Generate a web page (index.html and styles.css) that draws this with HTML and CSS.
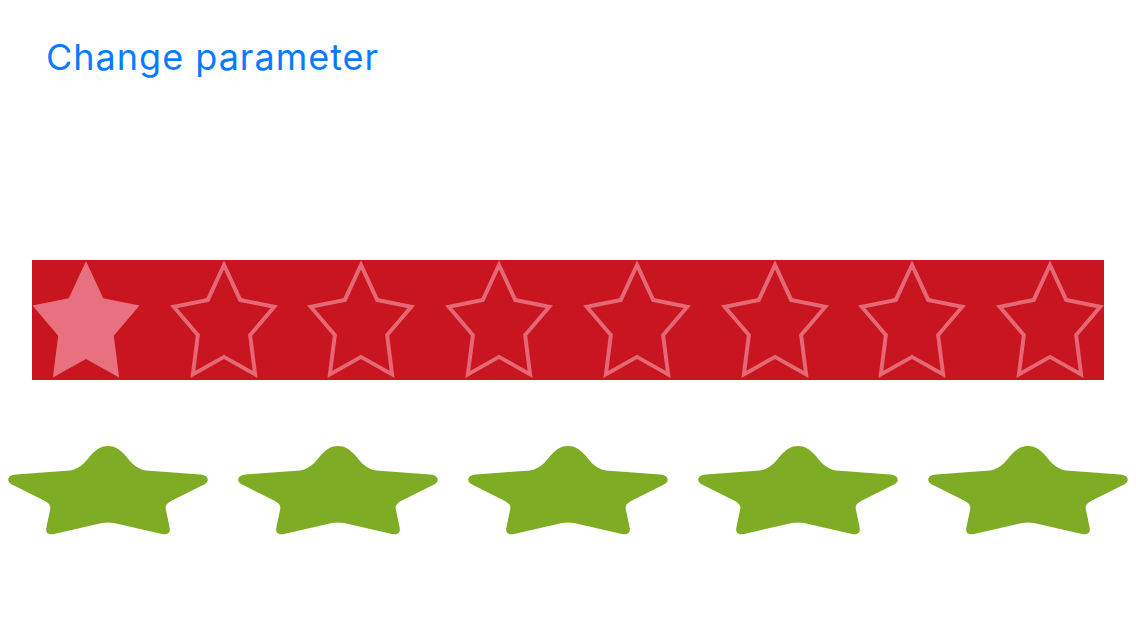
FILE: index.html
```html
<!DOCTYPE html>
<html lang="en">
<head>
<meta charset="utf-8">
<title>Rating</title>
<link rel="stylesheet" href="styles.css">
</head>
<body>
<main class="page">
  <button class="change-btn" type="button">Change parameter</button>

  <div class="rating rating--red">
    <svg class="star-red" viewBox="0 0 108 120"><polygon class="fill" points="54,1 71.2,38.3 107.5,45.5 81.8,75.7 87.1,117.5 54,98.9 20.9,117.5 26.2,75.7 0.5,45.5 36.8,38.3"/></svg>
    <svg class="star-red" viewBox="0 0 108 120"><polygon class="outline" points="54,1 71.2,38.3 107.5,45.5 81.8,75.7 87.1,117.5 54,98.9 20.9,117.5 26.2,75.7 0.5,45.5 36.8,38.3" transform="translate(54 65.4) scale(0.94) translate(-54 -65.4)"/></svg>
    <svg class="star-red" viewBox="0 0 108 120"><polygon class="outline" points="54,1 71.2,38.3 107.5,45.5 81.8,75.7 87.1,117.5 54,98.9 20.9,117.5 26.2,75.7 0.5,45.5 36.8,38.3" transform="translate(54 65.4) scale(0.94) translate(-54 -65.4)"/></svg>
    <svg class="star-red" viewBox="0 0 108 120"><polygon class="outline" points="54,1 71.2,38.3 107.5,45.5 81.8,75.7 87.1,117.5 54,98.9 20.9,117.5 26.2,75.7 0.5,45.5 36.8,38.3" transform="translate(54 65.4) scale(0.94) translate(-54 -65.4)"/></svg>
    <svg class="star-red" viewBox="0 0 108 120"><polygon class="outline" points="54,1 71.2,38.3 107.5,45.5 81.8,75.7 87.1,117.5 54,98.9 20.9,117.5 26.2,75.7 0.5,45.5 36.8,38.3" transform="translate(54 65.4) scale(0.94) translate(-54 -65.4)"/></svg>
    <svg class="star-red" viewBox="0 0 108 120"><polygon class="outline" points="54,1 71.2,38.3 107.5,45.5 81.8,75.7 87.1,117.5 54,98.9 20.9,117.5 26.2,75.7 0.5,45.5 36.8,38.3" transform="translate(54 65.4) scale(0.94) translate(-54 -65.4)"/></svg>
    <svg class="star-red" viewBox="0 0 108 120"><polygon class="outline" points="54,1 71.2,38.3 107.5,45.5 81.8,75.7 87.1,117.5 54,98.9 20.9,117.5 26.2,75.7 0.5,45.5 36.8,38.3" transform="translate(54 65.4) scale(0.94) translate(-54 -65.4)"/></svg>
    <svg class="star-red" viewBox="0 0 108 120"><polygon class="outline" points="54,1 71.2,38.3 107.5,45.5 81.8,75.7 87.1,117.5 54,98.9 20.9,117.5 26.2,75.7 0.5,45.5 36.8,38.3" transform="translate(54 65.4) scale(0.94) translate(-54 -65.4)"/></svg>
  </div>

  <div class="rating rating--green">
    <svg class="star-green" viewBox="0 0 200 90"><path d="M100 0C107 0 111 3 116 8C121 13 126 22.5 138 24.5L192 28.5C201 29 202 36 196 38.5L163 55C158 58 157 60 158 64L161.5 81C163 87 159.5 89 154 88L106 77C102 76.3 98 76.3 94 77L46 88C40.5 89 37 87 38.5 81L42 64C43 60 42 58 37 55L4 38.5C-2 36 -1 29 8 28.5L62 24.5C74 22.5 79 13 84 8C89 3 93 0 100 0Z"/></svg>
    <svg class="star-green" viewBox="0 0 200 90"><path d="M100 0C107 0 111 3 116 8C121 13 126 22.5 138 24.5L192 28.5C201 29 202 36 196 38.5L163 55C158 58 157 60 158 64L161.5 81C163 87 159.5 89 154 88L106 77C102 76.3 98 76.3 94 77L46 88C40.5 89 37 87 38.5 81L42 64C43 60 42 58 37 55L4 38.5C-2 36 -1 29 8 28.5L62 24.5C74 22.5 79 13 84 8C89 3 93 0 100 0Z"/></svg>
    <svg class="star-green" viewBox="0 0 200 90"><path d="M100 0C107 0 111 3 116 8C121 13 126 22.5 138 24.5L192 28.5C201 29 202 36 196 38.5L163 55C158 58 157 60 158 64L161.5 81C163 87 159.5 89 154 88L106 77C102 76.3 98 76.3 94 77L46 88C40.5 89 37 87 38.5 81L42 64C43 60 42 58 37 55L4 38.5C-2 36 -1 29 8 28.5L62 24.5C74 22.5 79 13 84 8C89 3 93 0 100 0Z"/></svg>
    <svg class="star-green" viewBox="0 0 200 90"><path d="M100 0C107 0 111 3 116 8C121 13 126 22.5 138 24.5L192 28.5C201 29 202 36 196 38.5L163 55C158 58 157 60 158 64L161.5 81C163 87 159.5 89 154 88L106 77C102 76.3 98 76.3 94 77L46 88C40.5 89 37 87 38.5 81L42 64C43 60 42 58 37 55L4 38.5C-2 36 -1 29 8 28.5L62 24.5C74 22.5 79 13 84 8C89 3 93 0 100 0Z"/></svg>
    <svg class="star-green" viewBox="0 0 200 90"><path d="M100 0C107 0 111 3 116 8C121 13 126 22.5 138 24.5L192 28.5C201 29 202 36 196 38.5L163 55C158 58 157 60 158 64L161.5 81C163 87 159.5 89 154 88L106 77C102 76.3 98 76.3 94 77L46 88C40.5 89 37 87 38.5 81L42 64C43 60 42 58 37 55L4 38.5C-2 36 -1 29 8 28.5L62 24.5C74 22.5 79 13 84 8C89 3 93 0 100 0Z"/></svg>
  </div>
</main>
</body>
</html>
```
FILE: styles.css
```css
html, body {
  margin: 0;
  padding: 0;
  background: #ffffff;
}

.page {
  display: flex;
  flex-direction: column;
  align-items: flex-start;
  width: 1136px;
  height: 640px;
  overflow: hidden;
}

.change-btn {
  margin: 35px 0 0 46px;
  padding: 0;
  border: 0;
  background: none;
  font-family: Inter, "Noto Sans", sans-serif;
  font-size: 36px;
  line-height: 44px;
  font-weight: 400;
  letter-spacing: 1px;
  color: #0a7aff;
  cursor: pointer;
}

.rating {
  display: flex;
}

.rating--red {
  margin: 181px 0 0 32px;
  width: 1072px;
  height: 120px;
  justify-content: space-between;
  background: #c8151f;
  overflow: hidden;
}

.star-red {
  display: block;
  width: 108px;
  height: 120px;
  flex: none;
  filter: blur(0.6px);
}

.star-red .fill {
  fill: #e8717f;
}

.star-red .outline {
  fill: none;
  stroke: #e56875;
  stroke-width: 4.2;
  stroke-linejoin: miter;
}

.rating--green {
  margin: 66px 0 0 8px;
  gap: 30px;
}

.star-green {
  display: block;
  width: 200px;
  height: 90px;
  flex: none;
  filter: blur(0.4px);
}

.star-green path {
  fill: #7eac25;
}
```
